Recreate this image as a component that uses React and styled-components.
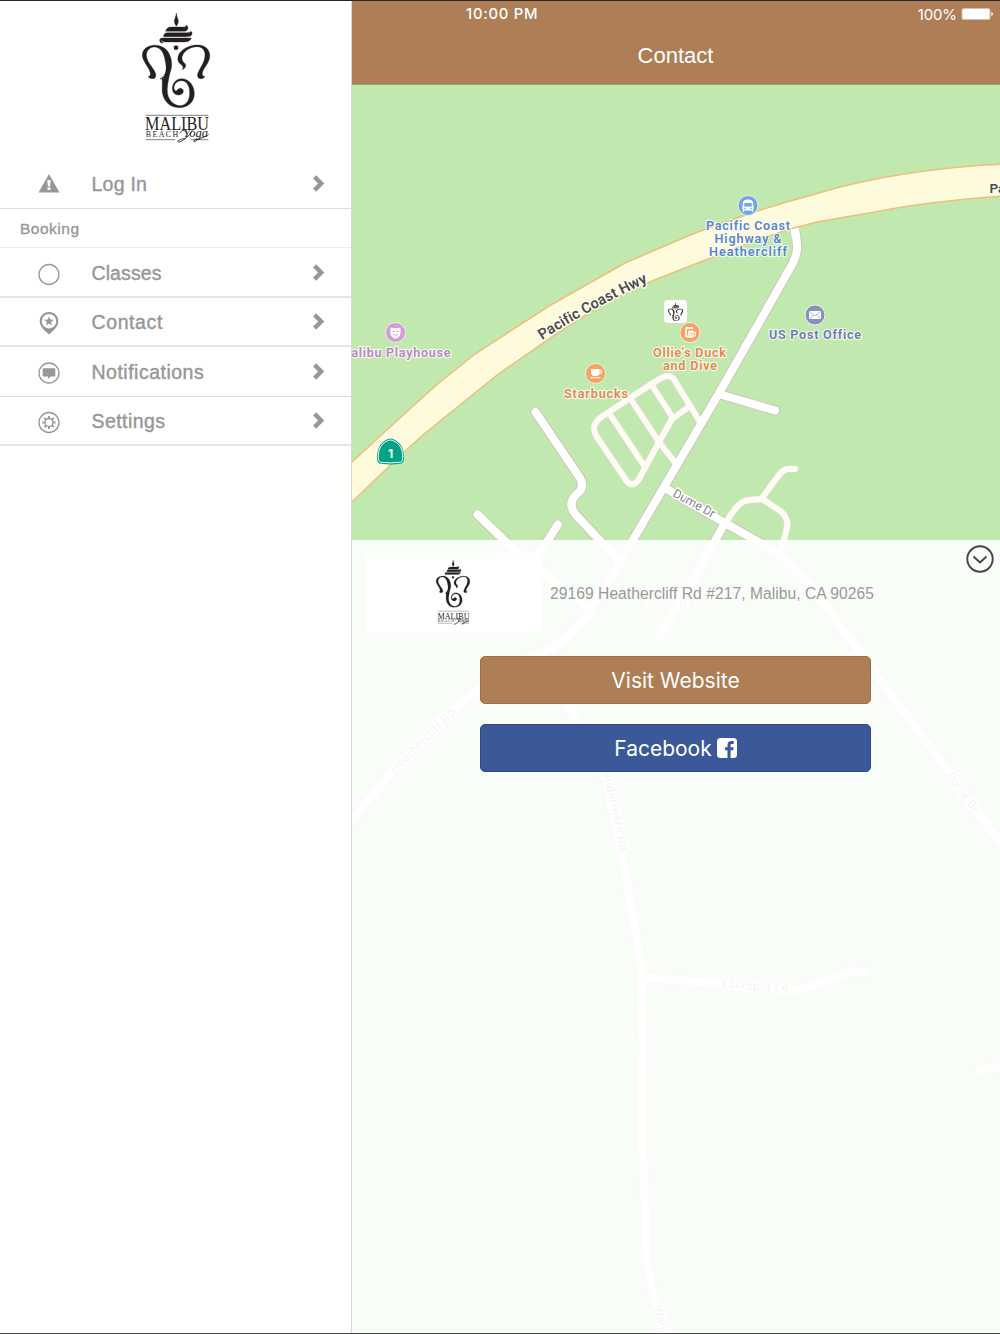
import styled, { createGlobalStyle } from "styled-components";

const brown = "#ae7e56";
const grey = "#979797";

const GlobalStyle = createGlobalStyle`
    * {
        box-sizing: border-box;
    }
    body {
        margin: 0;
        font-family: "Liberation Sans", Arial, sans-serif;
    }
    svg {
        display: block;
    }
`;

const Screen = styled.div`
    display: flex;
    width: 1000px;
    height: 1334px;
    overflow: hidden;
    background-color: white;
    border-top: 1px solid #2b2522;
    border-bottom: 1px solid #4a4a4a;
`;

const Sidebar = styled.aside`
    width: 352px;
    flex: none;
    border-right: 1px solid #d5dad2;
`;

const SidebarLogo = styled.div`
    display: flex;
    justify-content: center;
    height: 158px;
    padding: 4px 0 0 4px;
`;

const Row = styled.div`
    display: flex;
    align-items: center;
    height: 49.5px;
    padding: 0 26px 0 38px;
    border-bottom: ${props => props.$line || "2px solid #e6e6e6"};
    color: ${grey};
`;

const RowIcon = styled.svg`
    width: 22px;
    height: 24px;
    flex: none;
    margin-top: ${props => props.$drop || "4px"};
`;

const RowLabel = styled.span`
    flex: 1;
    margin-left: 31.5px;
    padding-top: 2px;
    font-size: 19.5px;
    line-height: 24px;
    letter-spacing: ${props => props.$spacing || "0.45px"};
    -webkit-text-stroke: 0.4px ${grey};
`;

const SectionTitle = styled.div`
    height: 39.5px;
    padding: 1px 20px 0;
    border-bottom: 1px solid #ededed;
    line-height: 37px;
    font-size: 15.5px;
    letter-spacing: 0.5px;
    color: ${grey};
    -webkit-text-stroke: 0.35px ${grey};
`;

const Main = styled.main`
    flex: 1;
    display: flex;
    flex-direction: column;
    min-width: 0;
`;

const Header = styled.header`
    height: 84px;
    flex: none;
    background-color: ${brown};
    border-bottom: 1px solid #92a373;
    color: white;
`;

const StatusBar = styled.div`
    display: flex;
    align-items: center;
    height: 26px;
    padding: 0 7px 0 114px;
    font-family: Inter, sans-serif;
    font-size: 15px;
`;

const Clock = styled.span`
    font-weight: 500;
    font-size: 14.8px;
    letter-spacing: 0.75px;
`;

const BatteryLevel = styled.span`
    margin: 0 4px 0 auto;
    letter-spacing: -0.1px;
`;

const Title = styled.h1`
    margin: 0 1px 0 0;
    text-align: center;
    font-size: 22px;
    font-weight: normal;
    line-height: 58px;
`;

// The map and the panel share one cell, so the panel covers the lower map.
const MapArea = styled.section`
    flex: 1;
    display: grid;
    grid-template-rows: 1248px;
    > * {
        grid-area: 1 / 1;
    }
`;

const Panel = styled.div`
    margin-top: 455px;
    background-color: rgba(255, 255, 255, 0.9);
    z-index: 1;
`;

const InfoRow = styled.div`
    display: flex;
    align-items: center;
    height: 92px;
    padding: 13px 6px 0 13px;
`;

const LogoCard = styled.div`
    display: flex;
    justify-content: center;
    width: 176px;
    height: 79px;
    padding: 3px 0 0 1px;
    background-color: white;
`;

const Address = styled.p`
    margin: 2px 0 0 9px;
    font-size: 15.6px;
    letter-spacing: 0.06px;
    color: #999;
    white-space: nowrap;
`;

const CollapseIcon = styled.svg`
    width: 28px;
    height: 28px;
    margin: -8px 0 0 auto;
    align-self: flex-start;
`;

const Buttons = styled.div`
    display: flex;
    flex-direction: column;
    gap: 20px;
    width: 391px;
    margin: 24px 0 0 128px;
`;

const Button = styled.button`
    display: flex;
    align-items: center;
    justify-content: center;
    gap: 5px;
    height: 48px;
    padding: 0;
    border: 1px solid ${props => props.$edge};
    border-radius: 5px;
    background-color: ${props => props.$color};
    color: white;
    font-family: Inter, sans-serif;
    font-size: 21px;
`;

const Poi = styled.text`
    font-family: Roboto, Inter, sans-serif;
    font-size: 12.6px;
    font-weight: 600;
    font-variant-ligatures: none;
    text-anchor: middle;
    fill: ${props => props.$color};
    stroke: rgba(255, 255, 255, 0.75);
    stroke-width: 2.4px;
    stroke-linejoin: round;
    paint-order: stroke;
`;

const RoadName = styled.text`
    font-family: Roboto, Inter, sans-serif;
    font-size: ${props => props.$size || "12.3px"};
    font-weight: ${props => props.$weight || 400};
    font-variant-ligatures: none;
    fill: ${props => props.$color || "#85838a"};
    stroke: ${props => props.$halo || "#ffffff"};
    stroke-width: 3px;
    stroke-linejoin: round;
    paint-order: stroke;
`;

const LogoText = styled.text`
    font-family: "Liberation Serif", serif;
    font-size: ${props => props.$size};
    font-style: ${props => props.$slant || "normal"};
    fill: #231f20;
`;

function Elephant() {
    return (
        <g fill="#231f20" stroke="#231f20" strokeWidth="1" strokeLinejoin="round">
            <path d="M139 24C140 36 145 41 145 49C145 56 141 59 140 63H138C137 59 133 56 133 49C133 41 138 36 139 24Z" />
            <path d="M107 79C108 70 115 66 124 66H158C166 66 171 65 167 60C174 62 175 69 173 73C171 78 166 79 158 79Z" />
            <path d="M101 95C100 88 104 83 113 83H170C179 83 184 81 181 78C188 81 187 88 184 91C181 95 175 95 168 95Z" />
            <path d="M100 113C91 117 86 105 91 101C94 99 99 99 105 99H184C181 108 173 111 163 111H106C98 111 94 105 94 105C93 108 96 112 100 113Z" />
            <circle cx="138" cy="128" r="6.500" />
            <path d="M68 221C75 221 79 215 77 206C74 195 61 182 54 168C42 144 55 127 72 126C90 125 100 141 104 160C108 180 111 192 105 206C102 215 97 218 90 222C106 222 117 213 122 198C130 175 122 146 107 132C97 123 83 119 69 121C42 124 30 144 41 166C48 181 58 191 61 204C62 210 60 214 54 215C58 218 61 221 68 221Z" />
            <path d="M211 221C204 220 201 214 203 206C207 194 217 181 222 167C231 140 219 125 202 125C180 125 162 138 157 153C153 164 160 171 165 176C170 183 165 190 157 194C162 186 157 181 151 177C140 169 142 152 151 142C162 128 184 120 203 120C231 120 247 143 236 168C230 182 219 193 217 204C216 210 219 215 225 215C221 219 217 222 211 221Z" />
            <path d="M96 221C98 241 95 254 98 268C104 294 125 308 147 308C173 308 193 291 193 266C193 241 177 222 157 221C139 220 127 235 127 250C127 263 136 271 147 270C155 269 161 264 160 257C159 250 151 247 145 252C140 255 140 261 134 255C128 244 137 227 154 227C172 227 179 245 179 264C179 286 169 302 149 302C131 301 118 288 113 268C110 251 114 230 120 203C113 214 106 220 96 221Z" />
        </g>
    );
}

function Logo({ width }) {
    return (
        <svg width={width} height={width * 145 / 95} viewBox="0 0 285 435">
            <Elephant />
            <path d="M47 331H235M47 404H135M183 404H235" stroke="#666" strokeWidth="2.5" />
            <LogoText $size="55px" x="45" y="376" textLength="192" lengthAdjust="spacingAndGlyphs">MALIBU</LogoText>
            <LogoText $size="24px" x="47" y="397" textLength="98">BEACH</LogoText>
            <LogoText $size="36px" $slant="italic" x="160" y="397" textLength="74" lengthAdjust="spacingAndGlyphs">Yoga</LogoText>
            <path d="M150 385C153 375 165 374 168 382M187 376C178 392 158 411 145 411C137 410 151 401 168 400M203 403C198 412 188 412 192 407C198 401 226 399 236 388" fill="none" stroke="#231f20" strokeWidth="2.5" />
        </svg>
    );
}

function Chevron() {
    return (
        <svg width="12" height="18" viewBox="0 0 12 18" fill="none" stroke={grey} strokeWidth="4.4">
            <path d="M1.600 2.900L8.200 9.500L1.600 16.100" />
        </svg>
    );
}

const streets = [
    "M795 229C798 247 799 254 789 270L722 388L620 562L590 610C580 628 567 641 542 653C510 668 480 685 455 708C430 731 405 757 381 785L352 820",
    "M665 488L725 523L778 553L808 582L864 658L951 775L978 812L1002 846",
    "M535.500 412L580 478Q585 487 578 493Q566 503 576 515L620 562",
    "M477.500 514.500L504 540L546 575L590 610",
    "M558 524.500L530 568",
    "M722 395L775 410.500",
    "M725 523L693 580L658 638",
    "M542 653C562 697 595 745 606 780C610 803 617 828 622 854L637 940Q641 960 641 977L643 1041L642 1133L647 1253C647 1280 656 1300 665 1334",
    "M641 977L720 984L790 990C820 989 835 974 852 971.5L865 972",
    "M980 1070L1002 1066",
];

const lanes = [
    "M700 422L675 381Q671 373 661 378L630 398L606 414Q588 424 597 437L626 480Q632 489 639 479L659 442L672 419L690 406",
    "M609 413L645 467",
    "M630 398L659 442L677 465",
    "M651 384L673 418",
    "M727 521C736 506 742 500 750 500L762 499L779 510Q789 517 787 528L780 554",
    "M762 498L779 475Q783 469 789 469H795",
];

const highway = "M340 472L352 462L412 407L439 383L475 354L549 306L625 263L695 233L757 211L787 202L840 187C888 175 940 167 1005 164V196C955 199 905 206 880 211L817 222L790 229L757 240L690 266L652 281L602 305L565 328L497 375L424 434L404 452L352 502L340 512Z";

function Map() {
    return (
        <svg width="648" height="1248" viewBox="352 85 648 1248">
            <rect x="352" y="85" width="648" height="1249" fill="#c1e8ae" />
            <g fill="none" strokeLinecap="round" strokeLinejoin="round">
                {streets.map(d => <path key={d} d={d} stroke="#d0c6bc" strokeWidth="10" />)}
                {lanes.map(d => <path key={d} d={d} stroke="#e6e0d2" strokeWidth="6.8" />)}
                {lanes.map(d => <path key={d} d={d} stroke="#fffaf5" strokeWidth="5.8" />)}
                {streets.map(d => <path key={d} d={d} stroke="#ffffff" strokeWidth="8" />)}
            </g>
            <path d={highway} fill="#fdfbdc" stroke="#f0bd7d" strokeWidth="1.5" />
            <path d="M795.500 238L794.800 229" stroke="#fff" strokeWidth="8" />

            <path id="hwyName" d="M542 340Q590 309 652 280" fill="none" />
            <RoadName $size="14.8px" $weight="600" $color="#4b4a48" $halo="#fffdf0">
                <textPath href="#hwyName" textLength="121">Pacific Coast Hwy</textPath>
            </RoadName>
            <RoadName $size="13.5px" $weight="600" $color="#4b4a48" $halo="#fffdf0" x="989.500" y="193">Pa</RoadName>
            <RoadName transform="translate(672 496) rotate(28.5)" textLength="46">Dume Dr</RoadName>
            <RoadName transform="translate(395 774) rotate(-45)" textLength="86">Heathercliff Rd</RoadName>
            <path id="wander" d="M600 762Q611 800 620 856" fill="none" />
            <RoadName><textPath href="#wander" textLength="92">Wandermere Rd</textPath></RoadName>
            <RoadName transform="translate(946 776) rotate(54)" textLength="46">Dume Dr</RoadName>
            <RoadName transform="translate(722 988) rotate(4)" textLength="66">Larkspur Ln</RoadName>
            <RoadName transform="translate(653 1307) rotate(74)">Wand</RoadName>
            <circle cx="679" cy="585" r="9" fill="#d8c3b8" opacity="0.3" />
            <Poi $color="#cbb7a8" x="678" y="609" textLength="79">Rebar Ranch</Poi>

            {/* transit stop */}
            <circle cx="748" cy="205.500" r="10" fill="#72a5ea" stroke="#e9f4e3" strokeWidth="1" />
            <path d="M744 201Q748 198.500 752 201L753 206V210H743V206ZM743.500 210V212M752.500 210V212" fill="#fff" stroke="#fff" strokeWidth="1" />
            <path d="M744.500 203H751.500L752 206.500H744Z" fill="#72a5ea" />
            <circle cx="745" cy="208.500" r="0.8" fill="#72a5ea" />
            <circle cx="751" cy="208.500" r="0.8" fill="#72a5ea" />
            <Poi $color="#5686c9" x="748" y="230" textLength="84">Pacific Coast</Poi>
            <Poi $color="#5686c9" x="748" y="243" textLength="67">Highway &amp;</Poi>
            <Poi $color="#5686c9" x="748" y="256" textLength="78">Heathercliff</Poi>

            {/* theatre */}
            <circle cx="395.500" cy="332.500" r="10" fill="#d29cd8" stroke="#e9f4e3" />
            <path d="M390.500 327.500Q395.500 329 400.500 327.500V333C400.500 336 398 338.500 395.500 338.500C393 338.500 390.500 336 390.500 333Z" fill="#fff" />
            <path d="M392.500 331.500H394.500M396.500 331.500H398.500M393 334Q395.500 337 398 334" fill="none" stroke="#d29cd8" />
            <Poi $color="#be83c5" x="395" y="357" textLength="111">Malibu Playhouse</Poi>

            {/* cafe */}
            <circle cx="595.500" cy="373.500" r="10" fill="#f7a262" stroke="#e9f4e3" />
            <path d="M591 369H599.500V372C599.500 375 598 376 596.500 376H594C592 376 591 374 591 372Z" fill="#fff" />
            <path d="M599 370Q602 370 601.500 372Q601 374 598.500 374M590 377.700H600.500" fill="none" stroke="#fff" strokeWidth="1.1" />
            <Poi $color="#e58745" x="596" y="398" textLength="64">Starbucks</Poi>

            {/* studio */}
            <rect x="664" y="300" width="23" height="23" rx="4" fill="#fff" />
            <g transform="translate(665.200 301) scale(0.075 0.065)"><Elephant /></g>

            {/* pub */}
            <circle cx="690" cy="332.500" r="10" fill="#f7a262" stroke="#e9f4e3" />
            <path d="M686.500 336.500H688.500M686 337V328.500M685.500 328H693" fill="none" stroke="#fff" strokeWidth="1.800" />
            <rect x="688.300" y="330.500" width="5.400" height="7.200" rx="0.800" fill="#fff" />
            <path d="M693 332.200H695.500V336H693" fill="none" stroke="#fff" />
            <path d="M690 332.500V335.800M692 332.500V335.800" stroke="#f7a262" strokeWidth="0.7" />
            <Poi $color="#e58745" x="689.500" y="357" textLength="73">Ollie's Duck</Poi>
            <Poi $color="#e58745" x="690" y="370" textLength="54">and Dive</Poi>

            {/* post office */}
            <circle cx="815" cy="315" r="10" fill="#8492c2" stroke="#e9f4e3" />
            <rect x="809" y="311" width="12" height="8" rx="1" fill="#fff" />
            <path d="M809.500 311.500L815 316L820.500 311.500M809.500 318.500L813.500 315M820.500 318.500L816.500 315" fill="none" stroke="#8492c2" strokeWidth="0.7" />
            <Poi $color="#6a79b4" x="815" y="339" textLength="92">US Post Office</Poi>

            {/* state route shield */}
            <path d="M390.500 438.600C394 439 397 441 399 443C403 447 404.500 454 404 460C403.500 462.500 402 463.500 400 463.800Q390.500 465.300 381 463.800C379 463.500 377.500 462.500 377 460C376.500 454 378 447 382 443C384 441 387 439 390.500 438.600Z" fill="#00a383" />
            <path d="M390.500 440C395 440.500 399 444 401 448C402.500 451 403 455 402.700 459C402.500 461.300 401.500 462 399.500 462.300Q390.500 463.500 381.500 462.300C379.500 462 378.500 461.300 378.300 459C378 455 378.500 451 380 448C382 444 386 440.500 390.500 440Z" fill="none" stroke="#fff" strokeWidth="1" />
            <text x="390.500" y="457.500" fill="#fff" fontFamily="Inter, sans-serif" fontSize="12" fontWeight="700" textAnchor="middle">1</text>
        </svg>
    );
}

const gearTeeth = [0, 45, 90, 135, 180, 225, 270, 315];

function App() {
    return (
        <Screen>
            <GlobalStyle />
            <Sidebar>
                <SidebarLogo><Logo width={95} /></SidebarLogo>
                <Row $line="1px solid #e0e0e0">
                    <RowIcon $drop="0px" viewBox="0 0 22 24">
                        <path d="M11 3L21.500 21.500H0.500Z" fill={grey} />
                        <path d="M9.300 9H12.700L12.100 15.500H9.900Z" fill="#fff" />
                        <rect x="9.500" y="16.500" width="3" height="2.500" fill="#fff" />
                    </RowIcon>
                    <RowLabel $spacing="0.25px">Log In</RowLabel>
                    <Chevron />
                </Row>
                <SectionTitle>Booking</SectionTitle>
                <Row>
                    <RowIcon viewBox="0 0 22 24">
                        <circle cx="11" cy="12.500" r="10" fill="none" stroke={grey} strokeWidth="1.3" />
                    </RowIcon>
                    <RowLabel $spacing="0.1px">Classes</RowLabel>
                    <Chevron />
                </Row>
                <Row>
                    <RowIcon viewBox="0 0 22 24">
                        <path d="M11 1C5.500 1 1.700 5 1.700 10C1.700 13.500 3.500 16 5.500 18.500L11 23.500L16.500 18.500C18.500 16 20.300 13.500 20.300 10C20.300 5 16.500 1 11 1Z" fill={grey} />
                        <circle cx="11" cy="10.200" r="7.200" fill="#fff" />
                        <path d="M11 5.400L12.300 8.600L15.700 8.800L13.100 11L13.900 14.400L11 12.600L8.100 14.400L8.900 11L6.300 8.800L9.700 8.600Z" fill={grey} />
                    </RowIcon>
                    <RowLabel $spacing="0.6px">Contact</RowLabel>
                    <Chevron />
                </Row>
                <Row $line="1px solid #dedede">
                    <RowIcon viewBox="0 0 22 24">
                        <circle cx="11" cy="12" r="10" fill="none" stroke={grey} strokeWidth="1.3" />
                        <path d="M5.500 7.300H16.500Q17.300 7.300 17.300 8.200V14.500Q17.300 15.500 16.500 15.500H12.500L10 18V15.500H5.500Q4.700 15.500 4.700 14.500V8.200Q4.700 7.300 5.500 7.300Z" fill={grey} />
                    </RowIcon>
                    <RowLabel $spacing="0.5px">Notifications</RowLabel>
                    <Chevron />
                </Row>
                <Row>
                    <RowIcon viewBox="0 0 22 24">
                        <circle cx="11" cy="12.500" r="10" fill="none" stroke={grey} strokeWidth="1.3" />
                        <circle cx="11" cy="12.500" r="4" fill="none" stroke={grey} strokeWidth="1.3" />
                        {gearTeeth.map(angle => (
                            <path key={angle} d="M11 5.900V8.500" transform={`rotate(${angle} 11 12.5)`} stroke={grey} strokeWidth="1.900" />
                        ))}
                    </RowIcon>
                    <RowLabel>Settings</RowLabel>
                    <Chevron />
                </Row>
            </Sidebar>
            <Main>
                <Header>
                    <StatusBar>
                        <Clock>10:00 PM</Clock>
                        <BatteryLevel>100%</BatteryLevel>
                        <svg width="32" height="14" viewBox="0 0 32 14">
                            <rect x="0.500" y="0.900" width="29" height="12.200" rx="2.500" fill="#fff" opacity="0.5" />
                            <rect x="1.500" y="2" width="27" height="10" rx="1.500" fill="#fff" />
                            <path d="M30.300 5Q32 5.500 32 7Q32 8.500 30.300 9Z" fill="#fff" />
                        </svg>
                    </StatusBar>
                    <Title>Contact</Title>
                </Header>
                <MapArea>
                    <Map />
                    <Panel>
                        <InfoRow>
                            <LogoCard><Logo width={47.5} /></LogoCard>
                            <Address>29169 Heathercliff Rd #217, Malibu, CA 90265</Address>
                            <CollapseIcon viewBox="0 0 28 28" fill="none" stroke="#444" strokeWidth="1.9">
                                <circle cx="14" cy="14" r="12.700" />
                                <path d="M7.500 11.500L14 17.500L20.500 11.500" />
                            </CollapseIcon>
                        </InfoRow>
                        <Buttons>
                            <Button $color={brown} $edge="#a06e45">Visit Website</Button>
                            <Button $color="#3b5998" $edge="#2d4a86">
                                Facebook
                                <svg width="20" height="20" viewBox="0 0 20 20">
                                    <rect width="20" height="20" rx="3.500" fill="#fff" />
                                    <path d="M10.500 20V12.200H8V9.200H10.500V7C10.500 4.300 12 3 14.300 3H16.700V6H15C13.900 6 13.600 6.500 13.600 7.400V9.200H16.700L16.200 12.200H13.600V20Z" fill="#3b5998" />
                                </svg>
                            </Button>
                        </Buttons>
                    </Panel>
                </MapArea>
            </Main>
        </Screen>
    );
}

export default App;
